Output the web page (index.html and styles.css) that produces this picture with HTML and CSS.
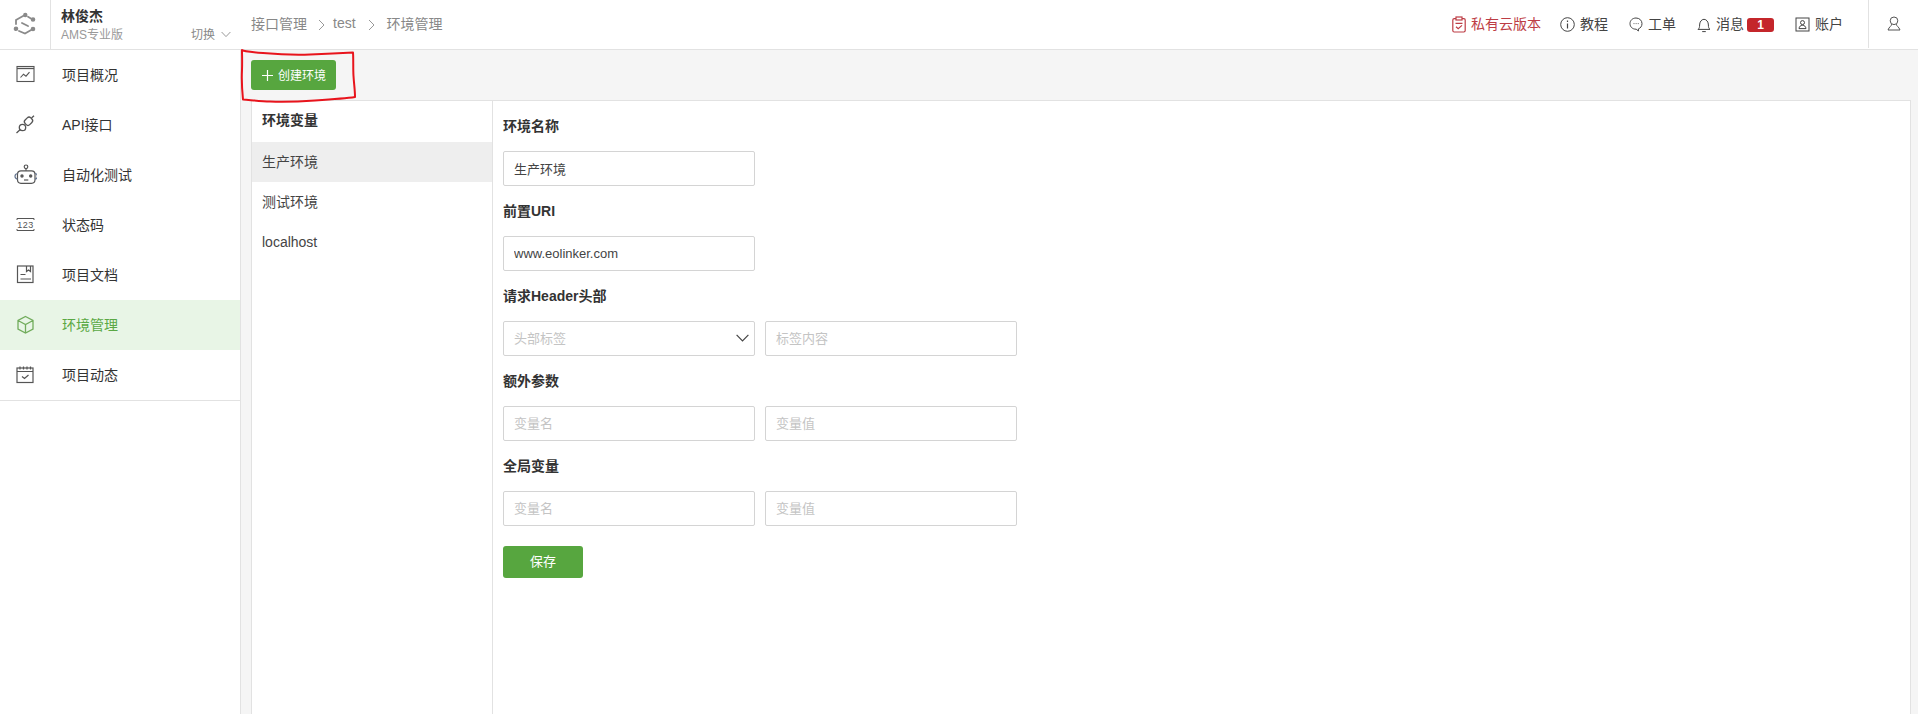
FILE: index.html
```html
<!DOCTYPE html>
<html lang="zh-CN">
<head>
<meta charset="utf-8">
<title>环境管理</title>
<link rel="stylesheet" href="styles.css">
</head>
<body>
<header class="topbar">
  <div class="logo">
    <svg width="30" height="30" viewBox="0 0 30 30" fill="none" stroke="#8a8a8a" stroke-width="1.8" stroke-linecap="round">
      <path d="M13.500 5.800 6 10v4"/><path d="M18 6.800l2.500 1.400"/>
      <path d="M9 21l6 2.500 7-4"/><path d="M12 13l6 3"/>
      <circle cx="15.300" cy="5" r="1.300" fill="#8a8a8a"/><circle cx="23" cy="9.500" r="1.400" fill="#8a8a8a"/>
      <circle cx="6" cy="18.800" r="1.400" fill="#8a8a8a"/><circle cx="23" cy="19" r="1.400" fill="#8a8a8a"/>
    </svg>
  </div>
  <div class="account">
    <div class="account-name">林俊杰</div>
    <div class="account-sub">
      <span>AMS专业版</span>
      <span class="switch">切换
        <svg width="10" height="7" viewBox="0 0 10 7" fill="none" stroke="#999" stroke-width="1"><path d="M.6 1L5 5.600 9.400 1"/></svg>
      </span>
    </div>
  </div>
  <nav class="crumbs">
    <span>接口管理</span>
    <svg class="crumb-sep" width="7" height="12" viewBox="0 0 7 12" fill="none" stroke="#999" stroke-width="1"><path d="M1 1l5 5-5 5"/></svg>
    <span class="crumb-mid">test</span>
    <svg class="crumb-sep" width="7" height="12" viewBox="0 0 7 12" fill="none" stroke="#999" stroke-width="1"><path d="M1 1l5 5-5 5"/></svg>
    <span>环境管理</span>
  </nav>
  <div class="top-actions">
    <a class="top-link top-link-red">
      <svg width="14" height="17" viewBox="0 0 14 17" fill="none" stroke="#bd3d45" stroke-width="1.2"><rect x=".8" y="2.600" width="12.400" height="13.400" rx="1.400"/><rect x="4" y="1" width="6" height="3" fill="#fff"/><path d="M3.500 7.400h7M4 10.800l2.200 2 3.800-3.400"/></svg>
      <span>私有云版本</span>
    </a>
    <a class="top-link">
      <svg width="15" height="15" viewBox="0 0 15 15" fill="none" stroke="#444" stroke-width="1"><circle cx="7.500" cy="7.500" r="6.800"/><path d="M7.500 6.500v5M7.500 3.600v1.400" stroke-width="1.200"/></svg>
      <span>教程</span>
    </a>
    <a class="top-link">
      <svg width="14" height="15" viewBox="0 0 14 15" fill="none" stroke="#444" stroke-width="1"><path d="M7 1c3.400 0 6 2.400 6 5.600 0 2.600-1.600 4.600-3.600 5.300v2.100L7.200 12.200C3.400 12.300 1 9.800 1 6.600 1 3.400 3.600 1 7 1z"/><path d="M4.600 6.600h.8M6.700 6.600h.8M8.800 6.600h.8"/></svg>
      <span>工单</span>
    </a>
    <a class="top-link top-link-msg">
      <svg width="14" height="16" viewBox="0 0 14 16" fill="none" stroke="#444" stroke-width="1"><path d="M1 12.400c1.300-1 1.600-2.200 1.600-4.400 0-3 1.800-5.700 4.400-5.700s4.400 2.700 4.400 5.700c0 2.200.3 3.400 1.600 4.400z"/><path d="M5.200 14.600h3.600"/></svg>
      <span>消息</span>
      <b class="badge">1</b>
    </a>
    <a class="top-link">
      <svg width="15" height="15" viewBox="0 0 15 15" fill="none" stroke="#444" stroke-width="1"><rect x="1" y="1" width="13" height="13"/><circle cx="7.500" cy="5.600" r="2"/><path d="M4 11.600c.2-2.200 1.600-3.300 3.500-3.300s3.300 1.100 3.500 3.300z"/></svg>
      <span>账户</span>
    </a>
  </div>
  <div class="top-user">
    <svg width="14" height="15" viewBox="0 0 14 15" fill="none" stroke="#555" stroke-width="1"><circle cx="7" cy="4.800" r="3.800"/><path d="M4.600 8.200C4.800 10 2 10.800 1 14h12c-1-3.200-3.800-4-3.600-5.800"/></svg>
  </div>
</header>

<div class="layout">
  <aside class="sidebar">
    <a class="menu-item">
      <svg class="menu-icon" viewBox="0 0 24 24" fill="none" stroke="#555" stroke-width="1.100"><rect x="4" y="3.500" width="17" height="15"/><path d="M4 5.500h17" stroke-width="1.300"/><path d="M7.500 14.500l3-3.300 2.500 2 3.500-4"/></svg>
      <span>项目概况</span>
    </a>
    <a class="menu-item">
      <svg class="menu-icon" viewBox="0 0 24 24" fill="none" stroke="#555" stroke-width="1.300"><circle cx="9.500" cy="14.500" r="3.200"/><rect x="11.500" y="5" width="8" height="6.500" rx="2.500" transform="rotate(-45 15.500 8.250)"/><path d="M3.500 20l3.500-3.200M18.500 5L21 2.700"/></svg>
      <span>API接口</span>
    </a>
    <a class="menu-item">
      <svg class="menu-icon" viewBox="0 0 24 24" fill="none" stroke="#555" stroke-width="1.200"><circle cx="13" cy="3.800" r="1.800"/><path d="M13 5.600v2.200"/><rect x="4.500" y="7.800" width="17.500" height="12.500" rx="3.500"/><path d="M4.500 10.500c-1.700.3-2.500 1.300-2.500 2.800s.8 2.500 2.500 2.800M22 10.500c1.700.3 2.500 1.300 2.500 2.800s-.8 2.500-2.500 2.800" stroke="#66758f"/><circle cx="9" cy="13" r="1.100" fill="#555"/><circle cx="17.700" cy="13" r="1.100" fill="#555"/><path d="M11 17h4.300"/></svg>
      <span>自动化测试</span>
    </a>
    <a class="menu-item">
      <svg class="menu-icon" viewBox="0 0 24 24" fill="none" stroke="#555" stroke-width="1"><path d="M4 7V5.500h17V7M4 16v1.500h17V16"/><text class="icon-num" x="12.500" y="14.800" text-anchor="middle">123</text></svg>
      <span>状态码</span>
    </a>
    <a class="menu-item">
      <svg class="menu-icon" viewBox="0 0 24 24" fill="none" stroke="#555" stroke-width="1.200"><rect x="4.500" y="3" width="15.500" height="16.500"/><path d="M13.500 3v5.500l2-1.500 2 1.500V3M7.500 11.500h5M7.500 16h10.500"/></svg>
      <span>项目文档</span>
    </a>
    <a class="menu-item is-active">
      <svg class="menu-icon" viewBox="0 0 24 24" fill="none" stroke="#71ac5c" stroke-width="1.300"><path d="M12.500 3.500l7.500 4v8.500l-7.500 4-7.500-4V7.500zM5 7.500l7.500 4 7.500-4M12.500 11.500V20"/></svg>
      <span>环境管理</span>
    </a>
    <a class="menu-item">
      <svg class="menu-icon" viewBox="0 0 24 24" fill="none" stroke="#555" stroke-width="1.200"><rect x="4" y="5" width="16" height="14.500"/><path d="M4 8.500h16M7 3.500v3M10.500 3.500v3M14 3.500v3M17.500 3.500v3M9 13.500l2.500 2 4-3.500"/></svg>
      <span>项目动态</span>
    </a>
  </aside>

  <main class="content">
    <div class="toolbar">
      <button class="btn btn-create" type="button">
        <svg width="11" height="11" viewBox="0 0 11 11" fill="none" stroke="#fff" stroke-width="1.200"><path d="M5.500 0v11M0 5.500h11"/></svg>
        <span>创建环境</span>
      </button>
    </div>
    <section class="panel">
      <div class="env-list">
        <div class="env-title">环境变量</div>
        <div class="env-row is-current">生产环境</div>
        <div class="env-row">测试环境</div>
        <div class="env-row">localhost</div>
      </div>
      <form class="env-form">
        <div class="field-label">环境名称</div>
        <div class="field-row"><input class="field" value="生产环境"></div>
        <div class="field-label">前置URI</div>
        <div class="field-row"><input class="field" value="www.eolinker.com"></div>
        <div class="field-label">请求Header头部</div>
        <div class="field-row">
          <div class="select">
            <span>头部标签</span>
            <svg width="13" height="8" viewBox="0 0 13 8" fill="none" stroke="#444" stroke-width="1.200"><path d="M.6.800l5.900 6 5.900-6"/></svg>
          </div>
          <input class="field" placeholder="标签内容">
        </div>
        <div class="field-label">额外参数</div>
        <div class="field-row"><input class="field" placeholder="变量名"><input class="field" placeholder="变量值"></div>
        <div class="field-label">全局变量</div>
        <div class="field-row"><input class="field" placeholder="变量名"><input class="field" placeholder="变量值"></div>
        <button class="btn btn-save" type="button">保存</button>
      </form>
    </section>
  </main>
</div>

<svg class="annotation" width="130" height="70" viewBox="240 45 130 70" fill="none" stroke="#e8141c" stroke-width="2" stroke-linecap="round" stroke-linejoin="round">
  <path d="M242 50C243 51 250 52 263 53 280 54.500 297 55 310 54.500 325 54 345 53 353 52.500 353.500 60 353 68 353.500 76 354 84 355 90 355 97 345 98.500 330 99.500 315 100.500 300 101.500 285 102 270 101.500 260 101 250 100 243 99.500 242 90 241.500 80 242 70 242.300 60 242 55 242 50z"/>
</svg>
</body>
</html>
```

FILE: styles.css
```css
* { box-sizing: border-box; }
html, body { margin: 0; height: 100%; }
body {
  position: relative;
  height: 714px;
  overflow: hidden;
  background: #f5f5f5;
  color: #333;
  font: 14px "Liberation Sans", "Noto Sans CJK SC", sans-serif;
}
.topbar {
  display: flex;
  align-items: center;
  height: 50px;
  background: #fff;
  border-bottom: 1px solid #e2e2e2;
}
.logo {
  display: flex;
  align-items: center;
  justify-content: center;
  width: 51px;
  height: 49px;
  border-right: 1px solid #e2e2e2;
}
.account {
  width: 189px;
  padding: 0 9px 0 10px;
}
.account-name {
  font-weight: 700;
  font-size: 14px;
  line-height: 20px;
  color: #333;
}
.account-sub {
  display: flex;
  justify-content: space-between;
  font-size: 12px;
  line-height: 18px;
  color: #999;
}
.switch { display: inline-flex; align-items: center; gap: 6px; color: #888; }
.crumbs {
  display: flex;
  align-items: center;
  margin-left: 11px;
  color: #888;
}
.crumbs span { padding-bottom: 3px; }
.crumb-sep { margin: 0 8px 0 11px; }
.crumb-mid { margin-right: 1px; }
.crumbs .crumb-mid + .crumb-sep { margin-right: 12px; }
.top-actions {
  display: flex;
  align-items: center;
  gap: 21px;
  margin-left: auto;
  margin-right: 25px;
}
.top-link {
  display: flex;
  align-items: center;
  gap: 5px;
  color: #444;
}
.top-link span { padding-bottom: 3px; }
.top-link-red { color: #bd3d45; margin-right: -2px; }
.badge {
  width: 27px;
  height: 14px;
  margin-left: -2px;
  border-radius: 3px;
  background: #c4262b;
  color: #fff;
  font-size: 12px;
  font-weight: 700;
  line-height: 14px;
  text-align: center;
}
.top-user {
  display: flex;
  align-items: center;
  justify-content: center;
  width: 50px;
  height: 48px;
  margin-top: -1px;
  padding-bottom: 2px;
  border-left: 1px solid #e2e2e2;
}
.layout {
  display: flex;
  height: 664px;
}
.sidebar {
  flex: none;
  width: 241px;
  height: 100%;
  background: #fff;
  border-right: 1px solid #e2e2e2;
}
.sidebar::after {
  content: "";
  display: block;
  border-top: 1px solid #e2e2e2;
}
.menu-item {
  display: flex;
  align-items: center;
  gap: 25px;
  height: 50px;
  padding-left: 13px;
  color: #333;
}
.menu-item span { padding-bottom: 2px; }
.menu-icon { flex: none; width: 24px; height: 24px; }
.icon-num {
  font: 9px "Liberation Sans", sans-serif;
  fill: #555;
  stroke: none;
  letter-spacing: .5px;
}
.is-active {
  background: #e8f5e6;
  color: #5aa844;
}
.menu-item.is-active { color: #5aa844; }
.content {
  flex: 1;
  min-width: 0;
  display: flex;
  flex-direction: column;
  padding: 0 7px 0 10px;
}
.toolbar {
  display: flex;
  align-items: center;
  flex: none;
  height: 50px;
}
.btn {
  border: 0;
  border-radius: 3px;
  background: #57a63f;
  color: #fff;
  font: 12px "Liberation Sans", "Noto Sans CJK SC", sans-serif;
}
.btn-create {
  display: flex;
  align-items: center;
  gap: 5px;
  width: 85px;
  height: 30px;
  padding: 0 0 0 11px;
}
.btn-create span { padding-bottom: 2px; }
.btn-save {
  display: block;
  width: 80px;
  height: 32px;
  margin-top: 20px;
  padding: 0 0 3px;
  font-size: 13px;
}
.panel {
  display: flex;
  flex: 1;
  background: #fff;
  border: 1px solid #e2e2e2;
  border-bottom: 0;
}
.env-list {
  flex: none;
  width: 241px;
  border-right: 1px solid #e2e2e2;
}
.env-title {
  height: 41px;
  padding-left: 10px;
  font-weight: 700;
  line-height: 39px;
  color: #333;
}
.env-row {
  height: 40px;
  padding-left: 10px;
  line-height: 40px;
  color: #444;
}
.is-current { background: #eee; }
.env-form { padding-left: 10px; }
.field-label {
  height: 50px;
  font-weight: 700;
  line-height: 50px;
  color: #333;
}
.field-row { display: flex; gap: 10px; }
.field, .select {
  width: 252px;
  height: 35px;
  padding: 0 10px;
  background: #fff;
  border: 1px solid #d4d4d4;
  border-radius: 2px;
  font: 13px "Liberation Sans", "Noto Sans CJK SC", sans-serif;
  color: #444;
  outline: 0;
}
.field::placeholder { color: #c4c4c4; opacity: 1; }
.select {
  display: flex;
  align-items: center;
  justify-content: space-between;
  padding-right: 5px;
  padding-bottom: 2px;
  color: #c4c4c4;
}
.annotation {
  position: absolute;
  left: 240px;
  top: 45px;
}
```
